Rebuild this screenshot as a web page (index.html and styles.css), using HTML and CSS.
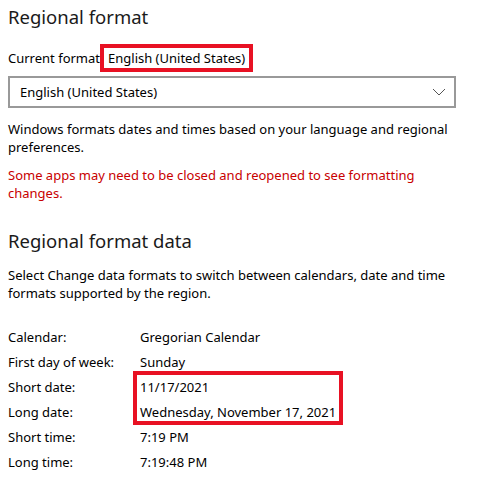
FILE: index.html
```html
<!DOCTYPE html>
<html>
<head>
<meta charset="utf-8">
<link rel="stylesheet" href="styles.css">
</head>
<body>
<div class="page">
  <h1 class="title">Regional format</h1>
  <div class="current">
    <span class="label">Current format</span>
    <span class="highlight">English (United States)</span>
  </div>
  <div class="select">
    <span class="select-text">English (United States)</span>
    <svg class="chevron" width="14" height="8" viewBox="0 0 14 8"><path d="M1 1 L7 7 L13 1" fill="none" stroke="#555" stroke-width="1"/></svg>
  </div>
  <p class="desc">Windows formats dates and times based on your language and regional preferences.</p>
  <p class="desc warn">Some apps may need to be closed and reopened to see formatting changes.</p>
  <h2 class="title title2">Regional format data</h2>
  <p class="desc">Select Change data formats to switch between calendars, date and time formats supported by the region.</p>
  <div class="data">
    <div class="row"><span class="k">Calendar:</span><span class="v">Gregorian Calendar</span></div>
    <div class="row"><span class="k">First day of week:</span><span class="v">Sunday</span></div>
    <div class="row"><span class="k">Short date:</span><span class="v">11/17/2021</span></div>
    <div class="row"><span class="k">Long date:</span><span class="v">Wednesday, November 17, 2021</span></div>
    <div class="row"><span class="k">Short time:</span><span class="v">7:19 PM</span></div>
    <div class="row"><span class="k">Long time:</span><span class="v">7:19:48 PM</span></div>
    <div class="mark"></div>
  </div>
</div>
</body>
</html>
```

FILE: styles.css
```css
html, body {
  margin: 0;
  padding: 0;
  background: #fff;
}
body {
  font-family: "Noto Sans", "Open Sans", sans-serif;
  font-size: 13px;
  color: #000;
}
.page {
  padding: 3px 0 0 8px;
  width: 448px;
}
.title {
  margin: 0;
  font-size: 18.5px;
  font-weight: 400;
  line-height: 28px;
  color: #1a1a1a;
}
.current {
  display: flex;
  align-items: center;
  margin-top: 13px;
  height: 28px;
  line-height: 19px;
}
.highlight {
  display: inline-flex;
  align-items: center;
  box-sizing: border-box;
  height: 28px;
  border: 4px solid #e81123;
  padding: 0 4px 0 4px;
}
.select {
  margin-top: 4px;
  box-sizing: border-box;
  height: 32px;
  border: 2px solid #999;
  display: flex;
  align-items: center;
  justify-content: space-between;
  padding: 0 8px 0 10px;
}
.chevron {
  display: block;
}
.desc {
  margin: 0;
  line-height: 18px;
  margin-top: 12px;
}
.warn {
  color: #c80000;
  margin-top: 10px;
}
.title2 {
  margin-top: 25px;
}
.title2 + .desc {
  margin-top: 11px;
}
.data {
  position: relative;
  margin-top: 23px;
}
.row {
  display: grid;
  grid-template-columns: 132px auto;
  height: 25px;
  line-height: 25px;
}
.mark {
  position: absolute;
  left: 125px;
  top: 46px;
  width: 210px;
  height: 54px;
  box-sizing: border-box;
  border: 4px solid #e81123;
}
```
